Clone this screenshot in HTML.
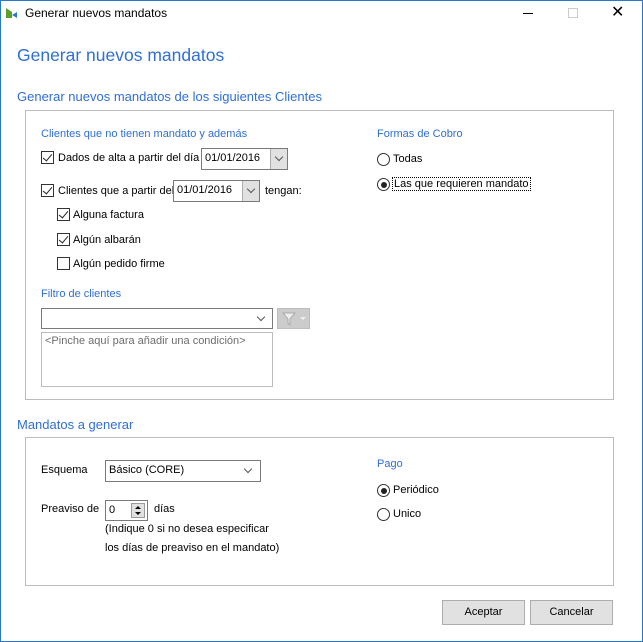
<!DOCTYPE html>
<html><head><meta charset="utf-8"><style>
*{box-sizing:border-box;margin:0;padding:0}
html,body{width:643px;height:642px;overflow:hidden;background:#fff;font-family:"Liberation Sans",sans-serif;font-size:11px;color:#000}
.a{position:absolute;white-space:nowrap}
.win{position:absolute;left:0;top:0;width:643px;height:642px;border:1px solid #2b79c6}
.blue{color:#2f6fd6}
.box{position:absolute;border:1px solid #bcbcbc}
.cb{position:absolute;width:13px;height:13px;border:1px solid #333;background:#fff}
.cb.on::after{content:"";position:absolute;left:3px;top:0px;width:4px;height:8px;border:solid #222;border-width:0 1.5px 1.5px 0;transform:rotate(40deg)}
.rb{position:absolute;width:13px;height:13px;border:1px solid #333;border-radius:50%;background:#fff}
.rb.on::after{content:"";position:absolute;left:2.5px;top:2.5px;width:6px;height:6px;border-radius:50%;background:#222}
.fld{position:absolute;border:1px solid #7a7a7a;background:#fff;padding-left:3px;line-height:19px}
.dd{position:absolute;top:0;right:0;width:17px;height:100%;background:#e1e1e1;border-left:1px solid #adadad}
.chev{position:absolute;width:6px;height:6px;border:solid #555;border-width:0 1px 1px 0;transform:rotate(45deg)}
.btn{position:absolute;background:#e1e1e1;border:1px solid #adadad;text-align:center;line-height:23px}
</style></head><body>
<div class="win"></div>
<svg class="a" style="left:5px;top:7px" width="13" height="13"><path d="M1 1 L1 11 L7 11 L7 5 Z" fill="#5aa02c"/><path d="M7 8 L12 5 L12 11 Z" fill="#2b79c6"/></svg>
<div class="a" style="left:25px;top:6px;font-size:12px">Generar nuevos mandatos</div>
<div class="a" style="left:523px;top:13px;width:10px;height:1px;background:#000"></div>
<div class="a" style="left:568px;top:8px;width:10px;height:10px;border:1px solid #ccc"></div>
<div class="a" style="left:611px;top:6px;font-size:16px;line-height:14px">✕</div>

<div class="a blue" style="left:17px;top:45px;font-size:17.5px">Generar nuevos mandatos</div>
<div class="a blue" style="left:17px;top:89px;font-size:13px">Generar nuevos mandatos de los siguientes Clientes</div>
<div class="box" style="left:25px;top:110px;width:589px;height:290px"></div>
<div class="a blue" style="left:41px;top:128px">Clientes que no tienen mandato y además</div>
<div class="cb on" style="left:41px;top:151px"></div>
<div class="a" style="left:58px;top:152px">Dados de alta a partir del día</div>
<div class="fld" style="left:201px;top:148px;width:87px;height:22px">01/01/2016<div class="dd"><div class="chev" style="left:5px;top:5px"></div></div></div>
<div class="cb on" style="left:41px;top:184px"></div>
<div class="a" style="left:58px;top:185px">Clientes que a partir del</div>
<div class="fld" style="left:173px;top:180px;width:87px;height:22px">01/01/2016<div class="dd"><div class="chev" style="left:5px;top:5px"></div></div></div>
<div class="a" style="left:265px;top:185px">tengan:</div>
<div class="cb on" style="left:57px;top:208px"></div><div class="a" style="left:73px;top:209px">Alguna factura</div>
<div class="cb on" style="left:57px;top:233px"></div><div class="a" style="left:73px;top:234px">Algún albarán</div>
<div class="cb" style="left:57px;top:257px"></div><div class="a" style="left:73px;top:258px">Algún pedido firme</div>
<div class="a blue" style="left:41px;top:288px">Filtro de clientes</div>
<div class="fld" style="left:41px;top:308px;width:232px;height:21px"><div class="chev" style="left:216px;top:5px"></div></div>
<div class="a" style="left:277px;top:308px;width:33px;height:21px;background:#cccccc;border:1px solid #bdbdbd"><svg width="31" height="19"><path d="M5 4 H17 L12 10 V16 L10 14 V10 Z" fill="#eee" stroke="#aaa"/><path d="M22 8 H28 L25 11Z" fill="#eee"/></svg></div>
<div class="a" style="left:41px;top:332px;width:232px;height:55px;border:1px solid #bcbcbc;color:#6d6d6d;padding:2px 3px">&lt;Pinche aquí para añadir una condición&gt;</div>
<div class="a blue" style="left:377px;top:128px">Formas de Cobro</div>
<div class="rb" style="left:377px;top:153px"></div><div class="a" style="left:393px;top:153px">Todas</div>
<div class="rb on" style="left:377px;top:178px"></div><div class="a" style="left:392px;top:177px;border:1px dotted #000;padding:0 1px">Las que requieren mandato</div>

<div class="a blue" style="left:17px;top:417px;font-size:13px">Mandatos a generar</div>
<div class="box" style="left:25px;top:437px;width:589px;height:149px"></div>
<div class="a" style="left:41px;top:464px">Esquema</div>
<div class="fld" style="left:105px;top:460px;width:156px;height:22px">Básico (CORE)<div class="chev" style="left:139px;top:5px"></div></div>
<div class="a" style="left:41px;top:503px">Preaviso de</div>
<div class="fld" style="left:105px;top:500px;width:43px;height:21px">0<div class="a" style="left:25px;top:2px;width:14px;height:15px;background:#e1e1e1;border:1px solid #999"><svg width="12" height="13" style="display:block"><path d="M3 5 L6 2 L9 5Z M3 8 L9 8 L6 11Z" fill="#000"/></svg></div></div>
<div class="a" style="left:154px;top:503px">días</div>
<div class="a" style="left:105px;top:523px">(Indique 0 si no desea especificar</div>
<div class="a" style="left:105px;top:542px">los días de preaviso en el mandato)</div>
<div class="a blue" style="left:377px;top:458px">Pago</div>
<div class="rb on" style="left:377px;top:484px"></div><div class="a" style="left:393px;top:484px">Periódico</div>
<div class="rb" style="left:377px;top:508px"></div><div class="a" style="left:393px;top:508px">Unico</div>
<div class="btn" style="left:442px;top:600px;width:83px;height:25px">Aceptar</div>
<div class="btn" style="left:530px;top:600px;width:83px;height:25px">Cancelar</div>
</body></html>
